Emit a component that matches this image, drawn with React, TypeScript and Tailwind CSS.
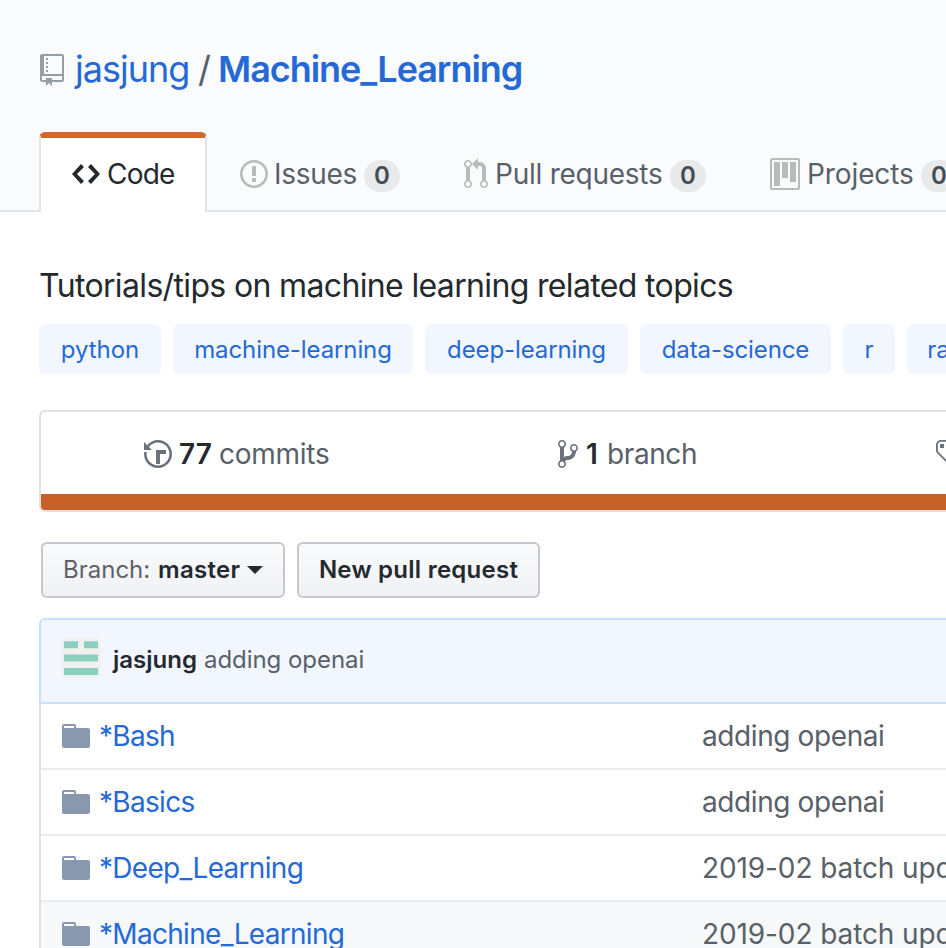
import type { ReactNode } from "react";

const paths = {
  repo: "M4 9H3V8h1v1zm0-3H3v1h1V6zm0-2H3v1h1V4zm0-2H3v1h1V2zm8-1v12c0 .55-.45 1-1 1H6v2l-1.5-1.5L3 16v-2H1c-.55 0-1-.45-1-1V1c0-.55.45-1 1-1h10c.55 0 1 .45 1 1zm-1 10H1v2h2v-1h3v1h5v-2zm0-10H2v9h9V1z",
  code: "M9.5 3L8 4.5 11.5 8 8 11.5 9.5 13 14 8 9.5 3zm-5 0L0 8l4.5 5L6 11.5 2.5 8 6 4.5 4.5 3z",
  issue: "M7 2.3c3.14 0 5.7 2.56 5.7 5.7s-2.56 5.7-5.7 5.7A5.71 5.71 0 0 1 1.3 8c0-3.14 2.56-5.7 5.7-5.7zM7 1C3.14 1 0 4.14 0 8s3.14 7 7 7 7-3.14 7-7-3.14-7-7-7zm1 3H6v5h2V4zm0 6H6v2h2v-2z",
  pull: "M11 11.28V5c-.03-.78-.34-1.47-.94-2.06C9.46 2.35 8.78 2.03 8 2H7V0L4 3l3 3V4h1c.27.02.48.11.69.31.21.2.3.42.31.69v6.28A1.993 1.993 0 0 0 10 15a1.993 1.993 0 0 0 1-3.72zm-1 2.92c-.66 0-1.2-.55-1.2-1.2 0-.65.55-1.2 1.2-1.2.65 0 1.2.55 1.2 1.2 0 .65-.55 1.2-1.2 1.2zM4 3c0-1.11-.89-2-2-2a1.993 1.993 0 0 0-1 3.72v6.56A1.993 1.993 0 0 0 2 15a1.993 1.993 0 0 0 1-3.72V4.72c.59-.34 1-.98 1-1.72zm-.8 10c0 .66-.55 1.2-1.2 1.2-.65 0-1.2-.55-1.2-1.2 0-.65.55-1.2 1.2-1.2.65 0 1.2.55 1.2 1.2zM2 4.2C1.34 4.2.8 3.65.8 3c0-.65.55-1.2 1.2-1.2.65 0 1.2.55 1.2 1.2 0 .65-.55 1.2-1.2 1.2z",
  project: "M10 12h3V2h-3v10zm-4-2h3V2H6v8zm-4 4h3V2H2v12zm-1 1h13V1H1v14zM14 0H1a1 1 0 0 0-1 1v14a1 1 0 0 0 1 1h13a1 1 0 0 0 1-1V1a1 1 0 0 0-1-1z",
  history: "M8 13H6V6h5v2H8v5zM7 1C4.81 1 2.87 2.02 1.59 3.59L0 2v4h4L2.5 4.5C3.55 3.17 5.17 2.3 7 2.3c3.14 0 5.7 2.56 5.7 5.7s-2.56 5.7-5.7 5.7A5.71 5.71 0 0 1 1.3 8c0-.34.03-.67.09-1H.08C.03 7.33 0 7.66 0 8c0 3.86 3.14 7 7 7s7-3.14 7-7-3.14-7-7-7z",
  branch: "M10 5c0-1.11-.89-2-2-2a1.993 1.993 0 0 0-1 3.72v.3c-.02.52-.23.98-.63 1.38-.4.4-.86.61-1.38.63-.83.02-1.48.16-2 .45V4.72a1.993 1.993 0 0 0-1-3.72C.88 1 0 1.89 0 3a2 2 0 0 0 1 1.72v6.56c-.59.35-1 .99-1 1.72 0 1.11.89 2 2 2 1.11 0 2-.89 2-2 0-.53-.2-1-.53-1.36.09-.06.48-.41.59-.47.25-.11.56-.17.94-.17 1.05-.05 1.95-.45 2.75-1.25S8.95 7.77 9 6.73h-.02C9.59 6.37 10 5.73 10 5zM2 1.8c.66 0 1.2.55 1.2 1.2 0 .65-.55 1.2-1.2 1.2C1.35 4.2.8 3.65.8 3c0-.65.55-1.2 1.2-1.2zm0 12.41c-.66 0-1.2-.55-1.2-1.2 0-.65.55-1.2 1.2-1.2.65 0 1.2.55 1.2 1.2 0 .65-.55 1.2-1.2 1.2zm6-8c-.66 0-1.2-.55-1.2-1.2 0-.65.55-1.2 1.2-1.2.65 0 1.2.55 1.2 1.2 0 .65-.55 1.2-1.2 1.2z",
  tag: "M7.73 1.73C7.26 1.26 6.62 1 5.96 1H3.5C2.13 1 1 2.13 1 3.5v2.47c0 .66.27 1.3.73 1.77l6.06 6.06c.39.39 1.02.39 1.41 0l4.59-4.59a.996.996 0 0 0 0-1.41L7.73 1.73zM2.38 7.09c-.31-.3-.47-.7-.47-1.13V3.5c0-.88.72-1.59 1.59-1.59h2.47c.42 0 .83.16 1.13.47l6.14 6.13-4.73 4.73-6.13-6.15zM3.01 3h2v2H3V3h.01z",
  folder: "M13 4H7V3c0-.66-.31-1-1-1H1c-.55 0-1 .45-1 1v10c0 .55.45 1 1 1h12c.55 0 1-.45 1-1V5c0-.55-.45-1-1-1zM6 4H1V3h5v1z",
};

function Icon({ name, w, className = "" }: { name: keyof typeof paths; w: number; className?: string }) {
  return (
    <svg width={w * 2} height={32} viewBox={`0 0 ${w} 16`} fill="currentColor" className={`shrink-0 ${className}`}>
      <path fillRule="evenodd" d={paths[name]} />
    </svg>
  );
}

function Label({ children, className }: { children: ReactNode; className: string }) {
  return <span className={`shrink-0 whitespace-nowrap ${className}`}>{children}</span>;
}

function Counter() {
  return (
    <span className="mt-1 flex h-8 w-9 shrink-0 items-center justify-center rounded-full bg-[#e8e9eb] text-2xl font-semibold text-[#444d56]">
      0
    </span>
  );
}

const topics = [
  { name: "python", cls: "w-[122px] tracking-[-0.05px]" },
  { name: "machine-learning", cls: "w-60 tracking-[-0.1px]" },
  { name: "deep-learning", cls: "w-[203px] tracking-[-0.1px]" },
  { name: "data-science", cls: "w-[191px] tracking-[-0.1px]" },
  { name: "r", cls: "w-[52px]" },
  { name: "random-forest", cls: "w-[203px] tracking-[-0.1px]" },
];

const files = [
  { name: "*Bash", message: "adding openai", bg: "bg-white", track: "tracking-[-0.4px]" },
  { name: "*Basics", message: "adding openai", bg: "bg-white", track: "tracking-[-0.4px]" },
  { name: "*Deep_Learning", message: "2019-02 batch update", bg: "bg-white", track: "tracking-[-0.1px]" },
  { name: "*Machine_Learning", message: "2019-02 batch update", bg: "bg-[#f6f8fa]", track: "tracking-[-0.1px]" },
];

export default function App() {
  return (
    <div className="h-[948px] w-[946px] overflow-hidden bg-white font-['Inter','Liberation_Sans',sans-serif] text-[28px] text-[#586069]">
      <header className="flex h-[212px] flex-col justify-between border-b-2 border-[#e1e4e8] bg-[#fafbfd] pl-[39px]">
        <h1 className="mt-[46px] ml-px flex h-12 items-center text-4xl leading-[48px]">
          <Icon name="repo" w={12} className="text-[#959da5]" />
          <Label className="mb-0.5 ml-[11px] w-[113px] tracking-[-1px] text-[#2469d6]">jasjung</Label>
          <Label className="mb-0.5 ml-[10px] w-[20px]">/</Label>
          <Label className="mb-0.5 font-semibold tracking-[-1.05px] text-[#2469d6]">Machine_Learning</Label>
        </h1>
        <nav className="-mb-0.5 flex h-20 w-[1100px]">
          <div className="flex w-[168px] items-center rounded-t-md border-x-2 border-t-6 border-x-[#e1e4e8] border-t-[#d1682a] bg-white pb-0.5 pl-[31px] text-[#24292e]">
            <Icon name="code" w={14} />
            <Label className="ml-[7px] tracking-[-0.8px]">Code</Label>
          </div>
          <div className="flex items-center pt-1 pl-[33px]">
            <Icon name="issue" w={14} className="text-[#b9babc]" />
            <Label className="ml-[6px] w-[90px] tracking-[-0.3px]">Issues</Label>
            <Counter />
          </div>
          <div className="flex items-center pt-1 pl-16">
            <Icon name="pull" w={12} className="text-[#b9babc]" />
            <Label className="ml-[7px] w-[175px] tracking-[-0.25px]">Pull requests</Label>
            <Counter />
          </div>
          <div className="flex items-center pt-1 pl-16">
            <Icon name="project" w={15} className="text-[#b9babc]" />
            <Label className="ml-[7px] w-[114px] tracking-[-0.1px]">Projects</Label>
            <Counter />
          </div>
        </nav>
      </header>

      <main className="pl-[39px]">
        <p className="mt-[49px] h-12 text-[32px] leading-[49px] tracking-[-0.65px] whitespace-nowrap text-[#24292e]">
          Tutorials/tips on machine learning related topics
        </p>
        <div className="mt-[15px] flex w-[1100px] gap-3 text-2xl text-[#2469d6]">
          {topics.map((t) => (
            <a key={t.name} className={`flex h-[50px] shrink-0 items-center justify-center rounded-md bg-[#f2f7ff] pt-0.5 whitespace-nowrap ${t.cls}`}>
              {t.name}
            </a>
          ))}
        </div>

        <section className="mt-9 h-[102px] w-[1240px] overflow-hidden rounded-md border-2 border-[#dfe1e5]">
          <div className="flex h-[82px] items-center pt-0.5">
            <Icon name="history" w={14} className="ml-[103px] text-[#6a737d]" />
            <Label className="ml-[7px] w-10 font-semibold text-[#24292e]">77</Label>
            <Label className="w-[339px] tracking-[-0.25px]">commits</Label>
            <Icon name="branch" w={10} className="text-[#6a737d]" />
            <Label className="ml-[8px] w-[21px] font-semibold text-[#24292e]">1</Label>
            <Label className="w-[327px] tracking-[-0.4px]">branch</Label>
            <Icon name="tag" w={14} className="text-[#6a737d]" />
          </div>
          <div className="h-4 bg-[#c86128]" />
        </section>

        <div className="mt-[30px] flex gap-3 pl-0.5 text-2xl font-semibold text-[#24292e]">
          <button className="flex h-14 w-[244px] items-center justify-center rounded-md border-2 border-[#c5c8cc] bg-linear-to-b from-[#fafbfc] to-[#eff1f5] whitespace-nowrap">
            <Label className="w-[95px] text-left font-normal text-[#5f6266]">Branch:</Label>
            <Label className="w-[89px] text-left tracking-[0.3px]">master</Label>
            <span className="border-x-8 border-t-8 border-x-transparent border-t-[#24292e]" />
          </button>
          <button className="flex h-14 w-[243px] items-center justify-center rounded-md border-2 border-[#c5c8cc] bg-linear-to-b from-[#fafbfc] to-[#eff1f5] tracking-[0.25px] whitespace-nowrap">
            New pull request
          </button>
        </div>

        <section className="mt-5 w-[1240px]">
          <div className="flex h-[86px] items-center rounded-t-md border-2 border-[#c8dfff] bg-[#f2f7ff] pb-1.5 pl-5 text-2xl">
            <svg width="40" height="40" viewBox="0 0 40 40" className="shrink-0">
              <rect width="40" height="40" rx="5" fill="#f0f0f0" />
              <path d="M3 3.2h14v7H3zM23 3.2h14v7H23zM3 16.5h34v7H3zM3 30h34v7H3z" fill="#8ccfc0" />
            </svg>
            <Label className="mt-1 ml-[12px] w-[91px] font-semibold text-[#24292e]">jasjung</Label>
            <Label className="mt-1 tracking-[-0.05px]">adding openai</Label>
          </div>
          <div className="border-l-2 border-[#dfe2e5]">
            {files.map((f) => (
              <div key={f.name} className={`flex h-[66px] items-center border-b-2 border-[#eaecef] pl-[21px] ${f.bg}`}>
                <Icon name="folder" w={14} className="text-[#8798af]" />
                <Label className="ml-[9px] w-[603px] tracking-[-0.7px] text-[#2469d6]">{f.name}</Label>
                <Label className={f.track}>{f.message}</Label>
              </div>
            ))}
          </div>
        </section>
      </main>
    </div>
  );
}
